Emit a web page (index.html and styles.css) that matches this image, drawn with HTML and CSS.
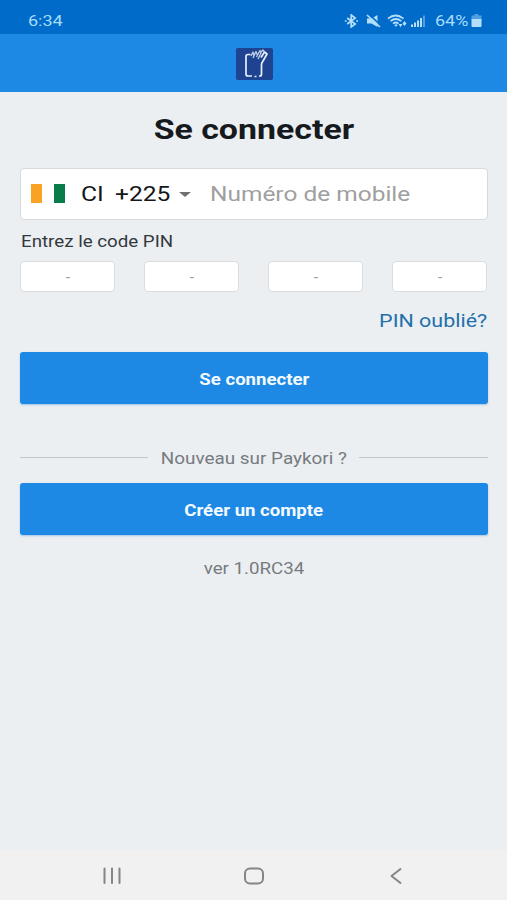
FILE: index.html
```html
<!DOCTYPE html>
<html lang="fr">
<head>
<meta charset="utf-8">
<title>Paykori</title>
<link rel="stylesheet" href="styles.css">
</head>
<body>
<div class="screen">
  <header class="status">
    <span class="wide clock">6:34</span>
    <div class="indicators">
      <svg class="bluetooth" width="15" height="14" viewBox="0 0 15 14"><path d="M3.200 4l8 6-4 3V1l4 3-8 6"/><path d="M.8 7h1.800M12.200 7H14"/></svg>
      <svg class="mute" width="15" height="14" viewBox="0 0 15 14"><path class="fill" d="M1 4.500h4.500L11.500 1v12l-6-3.500H1z"/><path class="cut" d="M2.700 0l12 11.500"/><path d="M1 1l13 12"/></svg>
      <svg class="wifi" width="20" height="14" viewBox="0 0 20 14"><path d="M1 4.600Q8.500-1.600 16.500 4.600M3.500 7.200Q9 2.800 14.300 7.200M6 9.700Q9 7.300 11.500 9.700"/><path class="fill" d="M7.300 11.200L9 9.900l1.700 1.300L9 12.800zM11.500 10h4l-2 3.300zM15.500 9.500l2-2.500 2 2.500-2 2.500z"/></svg>
      <svg class="signal" width="15" height="14" viewBox="0 0 15 14"><path class="fill" d="M0 10.500h2V13H0zM3 8.500h2V13H3zM6 6.500h2V13H6zM9 4h2v9H9z"/><path class="fill dim" d="M12 1.500h2V13h-2z"/></svg>
      <span class="wide percent">64%</span>
      <svg class="battery" width="11" height="14" viewBox="0 0 11 14"><path class="fill dim" d="M3.500 0h4v1.500H10.500V6H.5V1.500h3z"/><path class="fill" d="M.5 5h10v7q0 1-1 1h-8q-1 0-1-1z"/></svg>
    </div>
  </header>
  <div class="appbar">
    <svg width="37" height="32" viewBox="0 0 37 32">
      <rect width="37" height="32" rx="2" fill="#1d4391"/>
      <path d="M14.500 6.500H12q-2 0-2 2v17.500q0 2 2 2h4M18.500 28.500h2M23 28h1q1.500 0 1.500-2v-9q0-2 1.500-4l4-7-2.500-2-3.500 5.500" fill="none" stroke="#e8f0fb" stroke-width="1.700" stroke-linejoin="round"/>
      <path d="M15 8l2-4 1 4M17 10l3-6.500 1 3M20.500 9l3.500-6.500 1 2.500-3 6M25 4l2-2 1.500 2" fill="none" stroke="#c3d0e8" stroke-width="1.300" stroke-linejoin="round"/>
    </svg>
  </div>
  <main>
    <h1><span class="wide">Se connecter</span></h1>
    <div class="phone">
      <span class="flag"></span>
      <span class="wide country">CI</span>
      <span class="wide code">+225</span>
      <span class="caret"></span>
      <span class="wide placeholder">Numéro de mobile</span>
    </div>
    <div class="label"><span class="wide">Entrez le code PIN</span></div>
    <div class="pins"><span>-</span><span>-</span><span>-</span><span>-</span></div>
    <div class="forgot"><span class="wide">PIN oublié?</span></div>
    <div class="button"><span class="wide">Se connecter</span></div>
    <div class="divider"><p><span class="wide">Nouveau sur Paykori ?</span></p></div>
    <div class="button"><span class="wide">Créer un compte</span></div>
    <div class="version"><span class="wide">ver 1.0RC34</span></div>
  </main>
  <nav>
    <svg width="20" height="18" viewBox="0 0 20 18"><path d="M2.500 1.500v14.500M10 1.500v14.500M17.500 1.500v14.500"/></svg>
    <svg width="22" height="18" viewBox="0 0 22 18"><rect x="2" y="1.500" width="18" height="15" rx="5"/></svg>
    <svg width="14" height="18" viewBox="0 0 14 18"><path d="M11.500 2L2.500 9l9 7"/></svg>
  </nav>
</div>
</body>
</html>
```
FILE: styles.css
```css
* { box-sizing: border-box; }
body { margin: 0; font-family: Roboto, "Liberation Sans", sans-serif; }
h1, p { margin: 0; }
svg { flex: none; }
.screen { height: 900px; display: flex; flex-direction: column; background: #ebeff2; }

/* The interface type is set wider than Roboto's normal proportions. */
.wide { display: inline-block; flex: none; white-space: nowrap; transform: scaleX(1.17); transform-origin: left; }

.status { height: 34px; padding: 8px 25px 0 28px; display: flex; align-items: center; justify-content: space-between; background: #006bc9; color: #a5dcfb; font-size: 15px; }
.status .wide { transform: scaleX(1.2); }
.indicators { display: flex; align-items: center; }
.indicators svg { fill: none; stroke: #b3dffb; stroke-width: 1.7; }
.indicators .fill { fill: #b3dffb; stroke: none; }
.indicators .cut { stroke: #006bc9; }
.indicators .dim { opacity: .45; }
.bluetooth { margin-right: 7px; }
.mute { margin-right: 6px; }
.wifi { margin-right: 4px; }
.signal { margin-right: 9px; }
.percent { width: 36px; }

.appbar { height: 58px; display: flex; align-items: center; justify-content: center; background: #1e88e5; }
.appbar svg { margin: 1px 0 0 1px; }
main { flex: 1; padding: 0 19.500px 0 20.250px; }
h1 { height: 75.500px; display: flex; align-items: center; justify-content: center; color: #161a1e; font-size: 27px; font-weight: 700; }
h1 .wide, .button .wide, .divider .wide, .version .wide { transform-origin: center; }
h1 .wide { transform: scaleX(1.255); }

.phone { height: 52.500px; padding: 1px 0 0 9.500px; display: flex; align-items: center; background: #fff; border: 1.500px solid #d6dade; border-radius: 4px; color: #15181b; font-size: 21px; }
.flag { width: 34px; height: 19px; margin-bottom: 2px; background: linear-gradient(90deg, #faa226 0 33.300%, #fff 33.300% 66.600%, #087d49 66.600%); }
.country { width: 34px; margin-left: 16px; }
.code { width: 64px; }
.caret { border: 6px solid transparent; border-top: 5px solid #707070; border-bottom: 0; }
.placeholder { margin-left: 19px; color: #a0a0a0; transform: scaleX(1.165); }

.label { height: 41px; padding: 2px 0 0 .5px; display: flex; align-items: center; color: #33383d; font-size: 16px; }
.pins { display: grid; grid-template-columns: repeat(4, 95px); justify-content: space-between; }
.pins span { height: 31px; display: flex; align-items: center; justify-content: center; background: #fff; border: 1.500px solid #dadde0; border-radius: 4px; color: #999; font-size: 15px; }
.forgot { height: 60px; padding-bottom: 3px; display: flex; align-items: center; justify-content: flex-end; color: #226fac; font-size: 18.500px; }
.forgot .wide { transform: scaleX(1.16); transform-origin: right; }
.button { height: 52px; padding-top: 2px; display: flex; align-items: center; justify-content: center; background: #1e88e5; border-radius: 3px; box-shadow: 0 1px 2px #6da8d999; color: #f2faff; font-size: 16px; font-weight: 700; }
.button .wide { transform: scaleX(1.162); }
.divider { height: 79px; padding-top: 28px; display: flex; align-items: center; color: #777b80; font-size: 16px; }
.divider::before, .divider::after { content: ""; flex: 1; height: 1.500px; background: #c3c7ca; }
.divider p { width: 211px; padding-top: 1px; display: flex; justify-content: center; }
.divider .wide { transform: scaleX(1.18); }
.version { height: 67px; display: flex; align-items: center; justify-content: center; color: #777b80; font-size: 16px; }

nav { height: 50px; padding: 2px 104px 0 102px; display: flex; align-items: center; justify-content: space-between; background: #f1f1f1; }
nav svg { fill: none; stroke: #858585; stroke-width: 2; stroke-linecap: round; stroke-linejoin: round; }
nav svg:nth-child(2) { margin-right: 3px; }
```
